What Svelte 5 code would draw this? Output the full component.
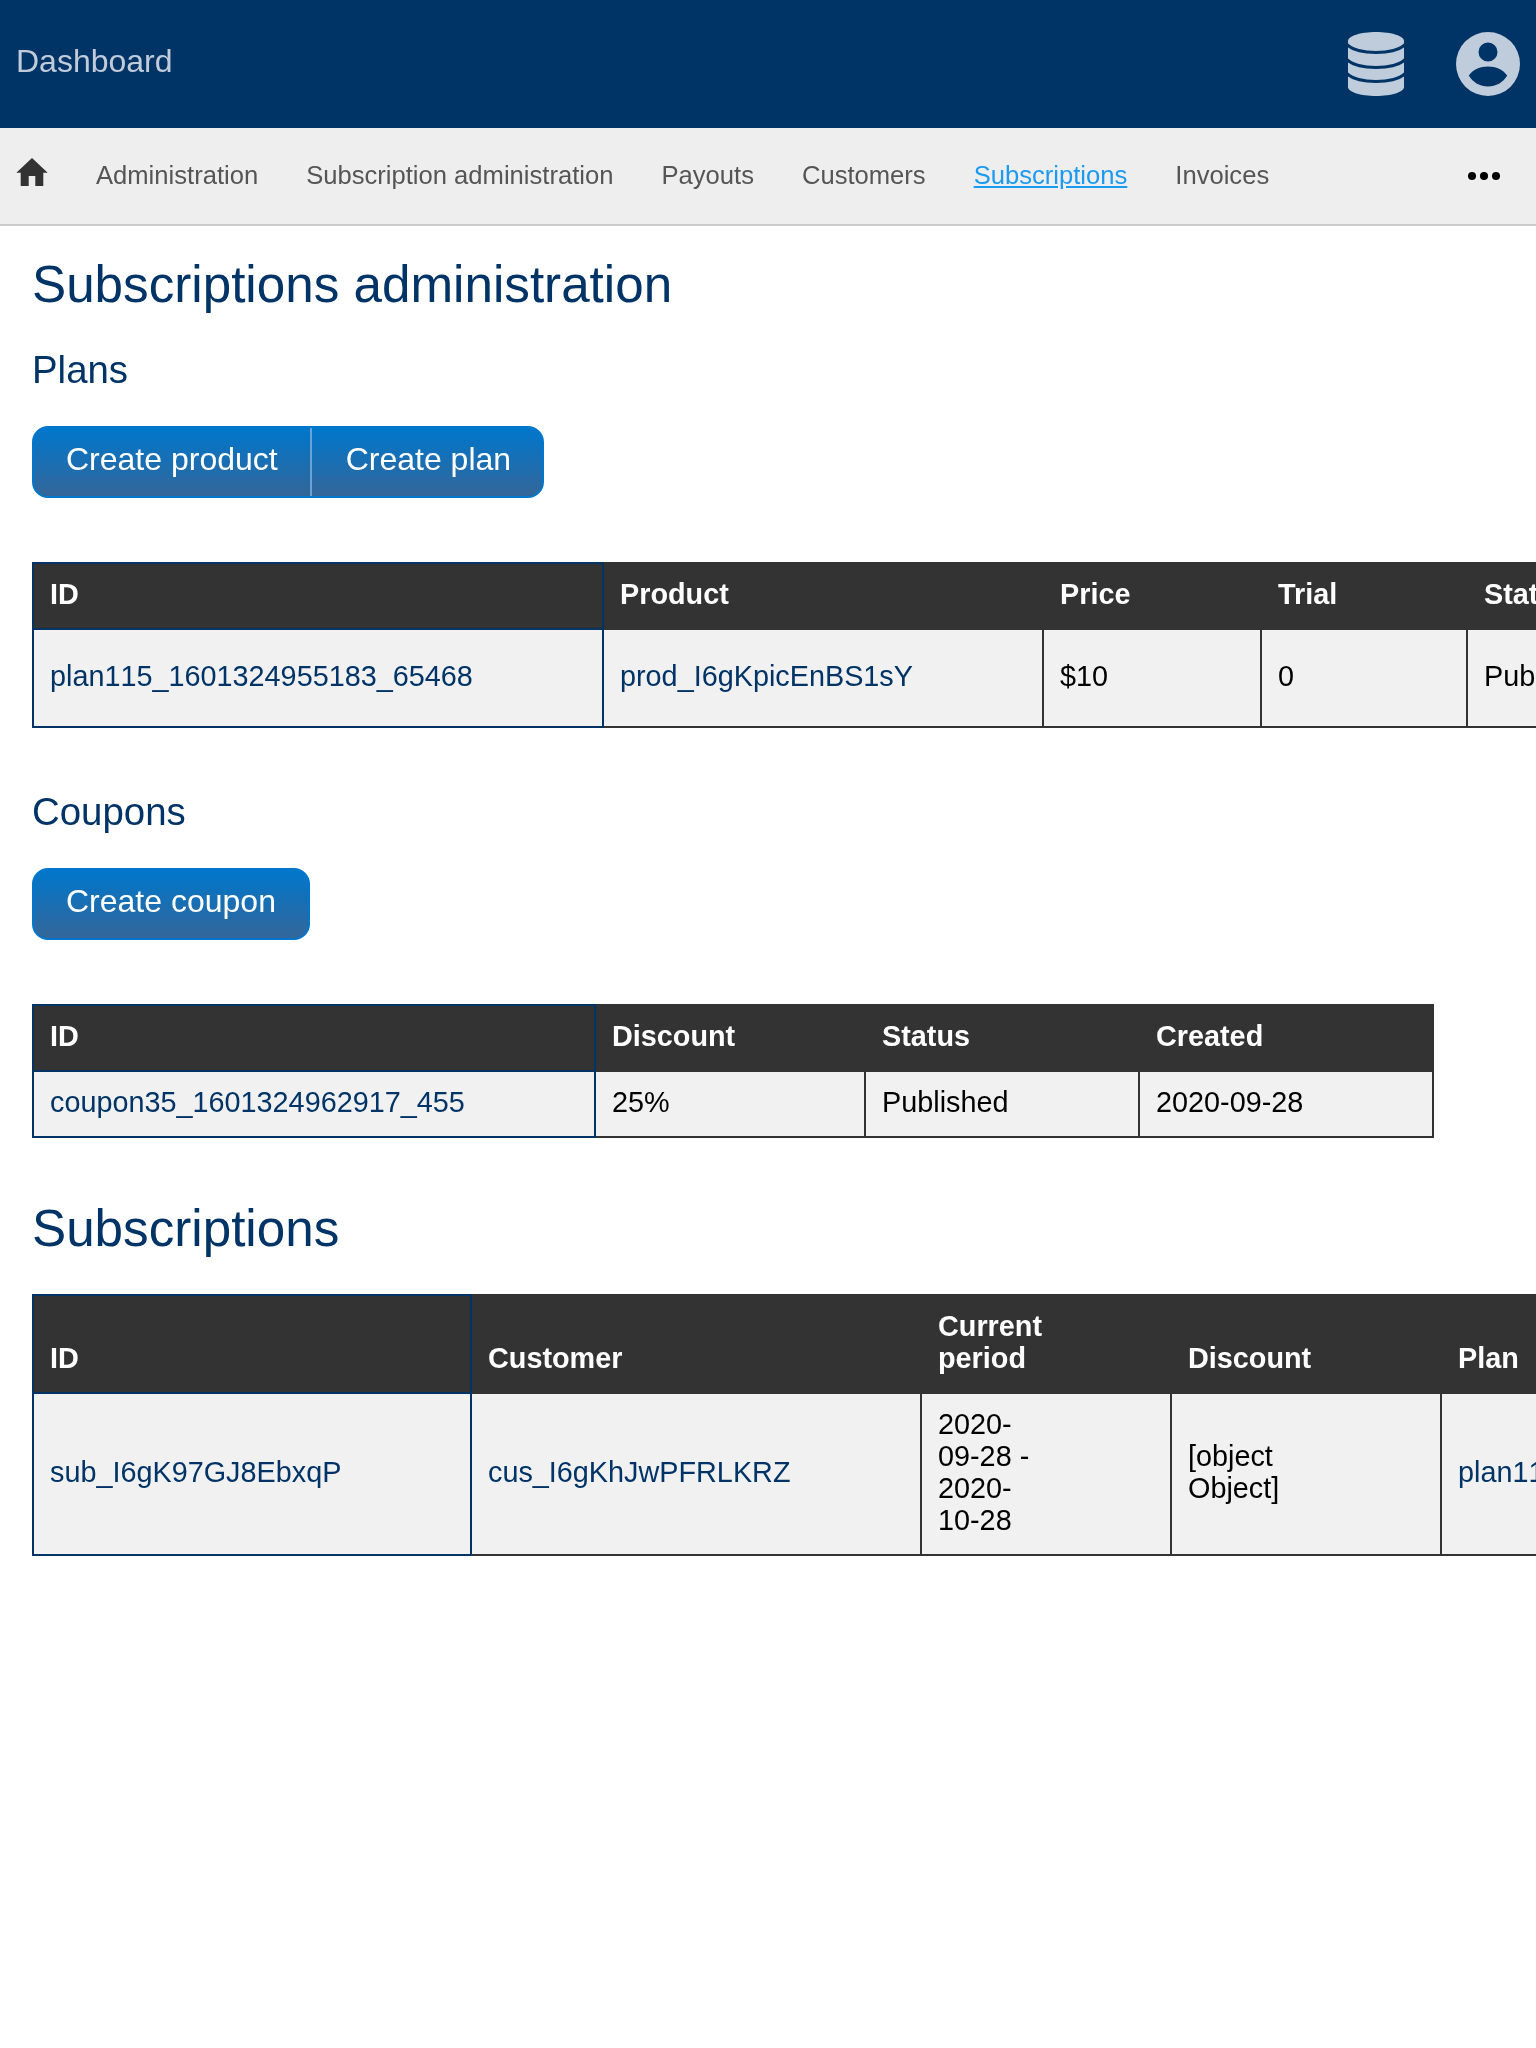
<script>
    const navLinks = ['Administration', 'Subscription administration', 'Payouts', 'Customers', 'Subscriptions', 'Invoices'];
</script>

<header class="topbar">
    <a class="brand" href="#top">Dashboard</a>
    <div class="top-icons">
        <svg class="db" viewBox="0 0 56 64" aria-hidden="true">
            <path class="shape" d="M0 9C0 4 12.5 0 28 0S56 4 56 9V55C56 60 43.5 64 28 64S0 60 0 55Z" />
            <path class="gap" d="M-1 12.500C8 23 48 23 57 12.500" />
            <path class="gap" d="M-1 27.500C8 38 48 38 57 27.500" />
            <path class="gap" d="M-1 41.500C8 52 48 52 57 41.500" />
        </svg>
        <svg class="user" viewBox="0 0 64 64" aria-hidden="true">
            <path class="shape" fill-rule="evenodd" d="M32 0A32 32 0 1 1 32 64A32 32 0 1 1 32 0ZM32 10.500A9.500 9.500 0 1 0 32 29.500A9.500 9.500 0 1 0 32 10.500ZM12.800 43.500C17 37.500 24 34.500 32 34.500S47 37.500 51.200 43.500C47 50.500 40 54.500 32 54.500S17 50.500 12.800 43.500Z" />
        </svg>
    </div>
</header>

<nav class="subnav">
    <a class="home" href="#top" aria-label="Home">
        <svg viewBox="0 0 32 28" aria-hidden="true">
            <path d="M16 0L31.700 14.700H27.300V28H19.300V18H12.700V28H4.700V14.700H.3Z" />
        </svg>
    </a>
    {#each navLinks as link}
        <a class="nav-link" class:active={link === 'Subscriptions'} href="#top">{link}</a>
    {/each}
    <span class="more">
        <i></i><i></i><i></i>
    </span>
</nav>

<main>
    <h1>Subscriptions administration</h1>

    <h2>Plans</h2>
    <div class="btn-group">
        <button>Create product</button>
        <button>Create plan</button>
    </div>

    <table class="plans">
        <colgroup>
            <col class="p1" /><col class="p2" /><col class="p3" /><col class="p4" /><col class="p5" />
        </colgroup>
        <thead>
            <tr>
                <th>ID</th>
                <th>Product</th>
                <th>Price</th>
                <th>Trial</th>
                <th>Status</th>
            </tr>
        </thead>
        <tbody>
            <tr>
                <td><a class="plan-id" href="#top">plan115_1601324955183_65468</a></td>
                <td><a href="#top">prod_I6gKpicEnBS1sY</a></td>
                <td>$10</td>
                <td>0</td>
                <td>Published</td>
            </tr>
        </tbody>
    </table>

    <h2 class="coupons-title">Coupons</h2>
    <div class="btn-group coupon-btn">
        <button>Create coupon</button>
    </div>

    <table class="coupons">
        <colgroup>
            <col class="c1" /><col class="c2" /><col class="c3" /><col class="c4" />
        </colgroup>
        <thead>
            <tr>
                <th>ID</th>
                <th>Discount</th>
                <th>Status</th>
                <th>Created</th>
            </tr>
        </thead>
        <tbody>
            <tr>
                <td><a href="#top">coupon35_1601324962917_455</a></td>
                <td>25%</td>
                <td>Published</td>
                <td>2020-09-28</td>
            </tr>
        </tbody>
    </table>

    <h1 class="subs-title">Subscriptions</h1>

    <table class="subs">
        <colgroup>
            <col class="s1" /><col class="s2" /><col class="s3" /><col class="s4" /><col class="s5" />
        </colgroup>
        <thead>
            <tr>
                <th>ID</th>
                <th>Customer</th>
                <th>Current<br />period</th>
                <th>Discount</th>
                <th>Plan</th>
            </tr>
        </thead>
        <tbody>
            <tr>
                <td><a href="#top">sub_I6gK97GJ8EbxqP</a></td>
                <td><a href="#top">cus_I6gKhJwPFRLKRZ</a></td>
                <td>2020-<br />09-28 -<br />2020-<br />10-28</td>
                <td>[object<br />Object]</td>
                <td><a class="plan-id" href="#top">plan115_1601324955183_65468</a></td>
            </tr>
        </tbody>
    </table>
</main>

<style>
    :global(body) {
        font-family: "Liberation Sans", Arial, sans-serif;
        background: #fff;
        overflow-x: hidden;
    }

    :global(#app) {
        will-change: transform;
    }

    a {
        color: #003366;
        text-decoration: none;
    }

    .topbar {
        height: 128px;
        background: #003366;
        display: flex;
        align-items: center;
        justify-content: space-between;
        padding: 0 16px;
    }

    .brand {
        font-size: 32px;
        color: #c1ccdb;
        margin-top: -6px;
    }

    .top-icons {
        display: flex;
        gap: 52px;
    }

    .db {
        width: 56px;
        height: 64px;
        display: block;
    }

    .user {
        width: 64px;
        height: 64px;
        display: block;
    }

    .shape {
        fill: #bfccdb;
    }

    .gap {
        fill: none;
        stroke: #003366;
        stroke-width: 3;
    }

    .subnav {
        height: 98px;
        box-sizing: border-box;
        background: #eeeeee;
        border-bottom: 2px solid #cccccc;
        display: flex;
        align-items: center;
        gap: 48px;
        padding: 0 16px;
    }

    .home {
        display: block;
        width: 32px;
        height: 28px;
        margin-top: -8px;
    }

    .home svg {
        display: block;
        width: 32px;
        height: 28px;
        fill: #333333;
    }

    .nav-link {
        font-size: 25.6px;
        color: #555555;
        margin-top: -2px;
    }

    .nav-link.active {
        color: #1a9af0;
        text-decoration: underline;
    }

    .more {
        margin-left: auto;
        margin-right: 20px;
        display: flex;
        gap: 4px;
    }

    .more i {
        display: block;
        width: 8px;
        height: 8px;
        border-radius: 50%;
        background: #000;
    }

    main {
        padding: 31px 0 0 32px;
        overflow: hidden;
    }

    h1,
    h2 {
        color: #003366;
        font-weight: 400;
        line-height: 1.1;
        margin: 0;
    }

    h1 {
        font-size: 51.2px;
    }

    h2 {
        font-size: 38.4px;
        margin-top: 36px;
    }

    .btn-group {
        display: inline-flex;
        vertical-align: top;
        margin-top: 34px;
        height: 72px;
        box-sizing: border-box;
        border: 2px solid #0077cc;
        border-radius: 16px;
        overflow: hidden;
        background: linear-gradient(#0077cc, #336699);
    }

    .coupon-btn {
        margin-top: 35px;
    }

    button {
        font: inherit;
        font-size: 32px;
        color: #fff;
        background: none;
        border: 0;
        padding: 0 32px 5px;
        cursor: pointer;
    }

    button + button {
        border-left: 2px solid #6ba3d6;
        padding-left: 34px;
        padding-right: 31px;
    }

    table {
        border-collapse: collapse;
        table-layout: fixed;
        font-size: 28.8px;
        line-height: 32px;
        margin-top: 64px;
    }

    th,
    td {
        border: 2px solid #333333;
        padding: 14px 16px 18px;
        text-align: left;
        overflow: hidden;
    }

    th {
        background: #333333;
        color: #fff;
        font-weight: 700;
        vertical-align: bottom;
    }

    td {
        background: #f1f1f1;
        color: #000;
        vertical-align: middle;
    }

    th:first-child,
    td:first-child {
        border-color: #003366;
    }

    .plan-id {
        font-kerning: none;
    }

    .plans {
        width: 1700px;
    }

    .plans td {
        padding: 30px 16px 34px;
    }

    .p1 { width: 570px; }
    .p2 { width: 440px; }
    .p3 { width: 218px; }
    .p4 { width: 206px; }
    .p5 { width: 266px; }

    .coupons-title {
        margin-top: 63px;
    }

    .coupons {
        width: 1400px;
    }

    .c1 { width: 562px; }
    .c2 { width: 270px; }
    .c3 { width: 274px; }
    .c4 { width: 294px; }

    .subs-title {
        margin-top: 63px;
    }

    .subs {
        width: 1900px;
        margin-top: 37px;
    }

    .s1 { width: 438px; }
    .s2 { width: 450px; }
    .s3 { width: 250px; }
    .s4 { width: 270px; }
    .s5 { width: 492px; }
</style>
